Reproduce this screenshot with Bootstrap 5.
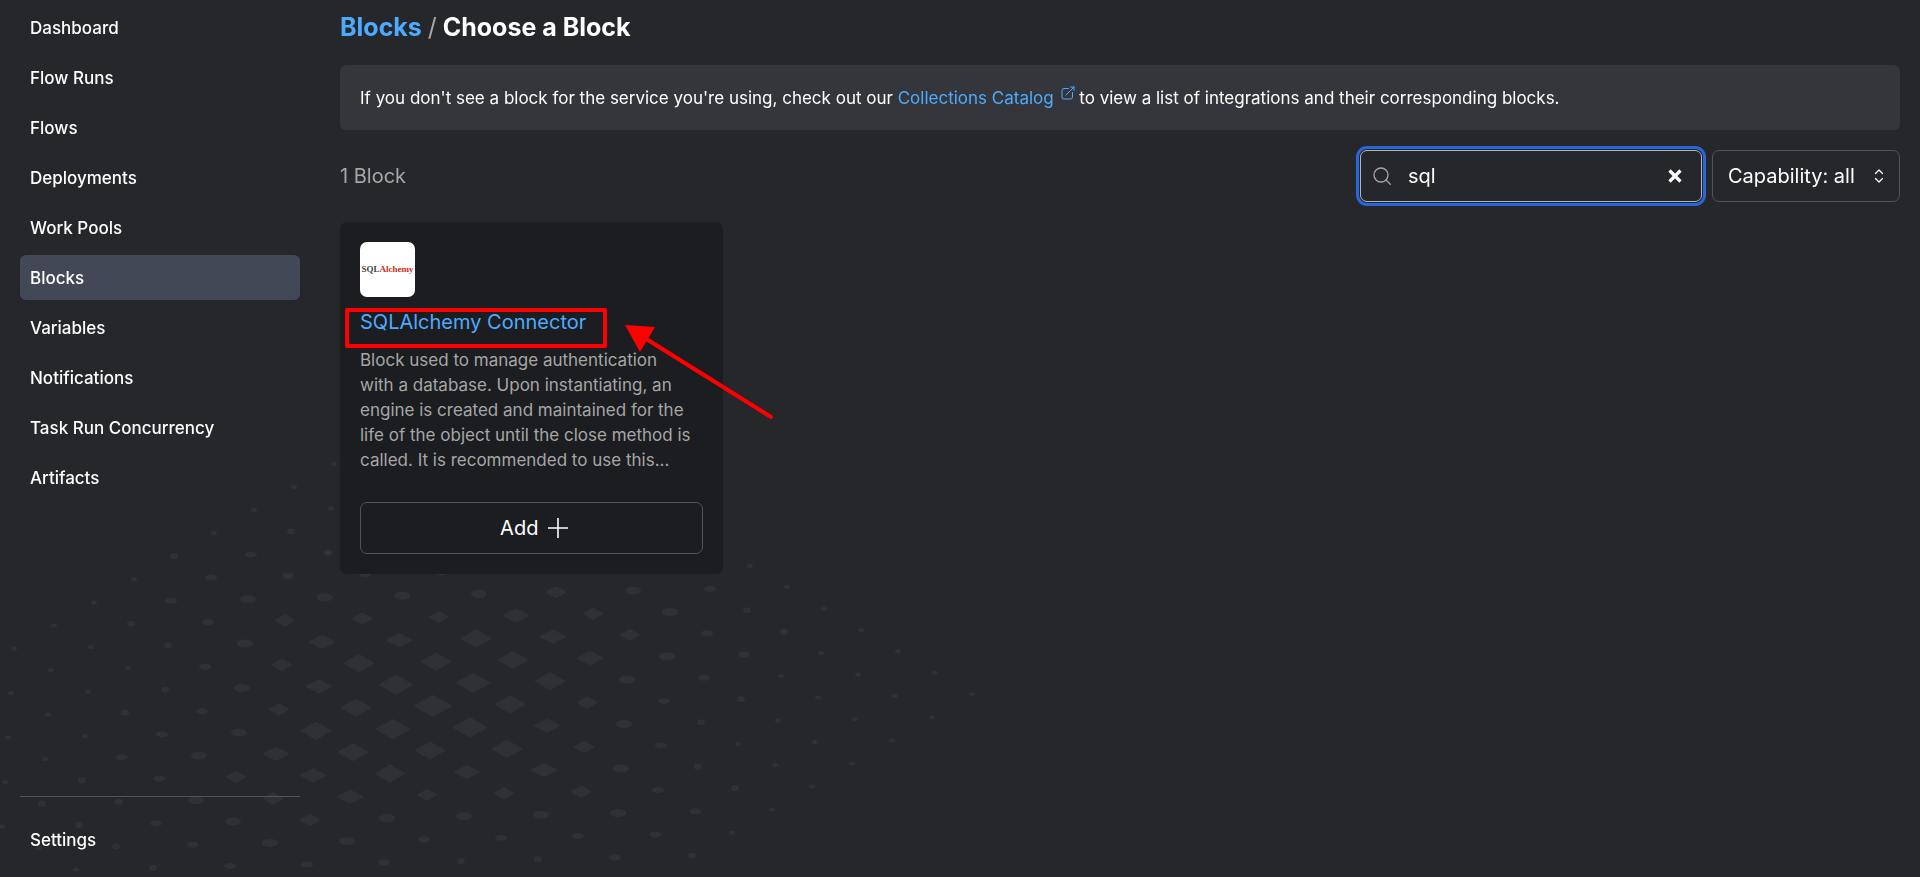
<!DOCTYPE html>
<html lang="en" data-bs-theme="dark">
<head>
<meta charset="utf-8">
<meta name="viewport" content="width=device-width, initial-scale=1">
<title>Blocks / Choose a Block</title>
<link href="https://cdn.jsdelivr.net/npm/bootstrap@5.3.0/dist/css/bootstrap.min.css" rel="stylesheet">
<style>
  :root { --line: #51525c; --sky: #4dabff; --soft: #a6a6a6; }
  body { background: #26272b; color: #fff; font-family: Inter, "Liberation Sans", sans-serif; font-size: 20px; line-height: 30px; }
  a { color: var(--sky); text-decoration: none; }
  .backdrop-dots { position: fixed; left: 0; bottom: 0; z-index: -1; fill: #303135; stroke: #303135; stroke-linejoin: round; pointer-events: none; }
  .side { width: 320px; padding: 5px 20px 15px; }
  .side .nav { gap: 5px; }
  .side .nav-link { color: #fff; font-size: 17px; font-weight: 500; line-height: 25px; padding: 11px 10px 9px; border-radius: 6px; }
  .side .nav-link.active { background: #434857; }
  .side-foot { border-top: 1px solid var(--line); padding-top: 20px; }
  .content { padding: 10px 20px 20px; gap: 20px; min-width: 0; }
  .crumbs { font-size: 25px; font-weight: 700; line-height: 35px; }
  .crumbs .slash { color: var(--soft); font-weight: 400; }
  .note, .block-text { font-size: 17px; line-height: 25px; }
  .note { background: #35363b; border-radius: 6px; padding: 21px 20px 19px; }
  .note svg { vertical-align: 4px; margin-left: 2px; }
  .tally { color: var(--soft); }
  .controls { gap: 10px; }
  .field { height: 52px; border: 1px solid var(--line); border-radius: 7px; background: #26272b; }
  .search { width: 342px; border-color: #b5b5b5; box-shadow: 0 0 0 1px #26272b, 0 0 0 4px #2668dc; padding: 0 19px 0 12px; gap: 17px; }
  .search input { background: none; border: 0; outline: 0; color: #fff; min-width: 0; padding: 0; }
  .search button { background: none; border: 0; padding: 0; line-height: 1; }
  .pick { width: 188px; }
  .pick select { appearance: none; background: none; border: 0; outline: 0; color: #fff; padding: 0 15px; }
  .pick svg { position: absolute; right: 15px; top: 17px; pointer-events: none; }
  .block-grid { --bs-gutter-x: 10px; --bs-gutter-y: 10px; }
  .block-card { background: #1c1d20; border: 0; border-radius: 7px; padding: 20px; }
  .logo-tile { width: 55px; height: 55px; border-radius: 7px; background: #fff; color: #444; font: 700 9px/55px "Liberation Serif", serif; }
  .logo-tile b { color: #cf2a14; }
  .block-name { font-size: 20px; font-weight: 400; line-height: 30px; margin: 10px 0 11px; }
  .block-text { color: var(--soft); margin-bottom: 29px; }
  .add-btn { height: 52px; border: 1px solid var(--line); border-radius: 7px; color: #fff; font-size: 20px; gap: 10px; padding-left: 18px; }
  .markup { position: absolute; left: 0; top: 0; overflow: visible; pointer-events: none; }
</style>
</head>
<body>
<svg class="backdrop-dots" id="dots" width="1000" height="440" viewBox="0 437 1000 440" aria-hidden="true"></svg>

<div class="d-flex min-vh-100">
  <aside class="side d-flex flex-column flex-shrink-0">
    <nav class="nav flex-column flex-nowrap">
      <a class="nav-link" href="#">Dashboard</a>
      <a class="nav-link" href="#">Flow Runs</a>
      <a class="nav-link" href="#">Flows</a>
      <a class="nav-link" href="#">Deployments</a>
      <a class="nav-link" href="#">Work Pools</a>
      <a class="nav-link active" aria-current="page" href="#">Blocks</a>
      <a class="nav-link" href="#">Variables</a>
      <a class="nav-link" href="#">Notifications</a>
      <a class="nav-link" href="#">Task Run Concurrency</a>
      <a class="nav-link" href="#">Artifacts</a>
    </nav>
    <div class="side-foot nav flex-column mt-auto">
      <a class="nav-link" href="#">Settings</a>
    </div>
  </aside>

  <main class="content d-flex flex-column flex-grow-1">
    <h1 class="crumbs m-0"><a href="#">Blocks</a> <span class="slash">/</span> Choose a Block</h1>

    <div class="note">If you don't see a block for the service you're using, check out our
      <a href="#">Collections Catalog
        <svg width="14" height="14" viewBox="0 0 14 14" fill="none" stroke="currentColor" stroke-linecap="round" stroke-linejoin="round" aria-hidden="true"><path d="M7.500 2.500H3Q1 2.500 1 4.500v6.500q0 2 2 2h6.500q2 0 2-2V6.500M5 9l8-8M9.500 1H13v3.500"/></svg></a>
      to view a list of integrations and their corresponding blocks.</div>

    <div class="d-flex align-items-center justify-content-between">
      <span class="tally">1 Block</span>
      <div class="controls d-flex">
        <div class="field search d-flex align-items-center">
          <svg class="flex-shrink-0" width="18" height="18" viewBox="0 0 18 18" fill="none" stroke="#a6a6a6" stroke-width="1.300" stroke-linecap="round" aria-hidden="true"><circle cx="8" cy="8" r="7"/><path d="M13 13l4.300 4.300"/></svg>
          <input class="flex-grow-1" type="text" value="sql" aria-label="Search blocks">
          <button type="button" class="d-flex text-white" aria-label="Clear search">
            <svg width="14" height="14" viewBox="0 0 14 14" fill="none" stroke="currentColor" stroke-width="3.200" aria-hidden="true"><path d="M1.500 1.500l11 11M12.500 1.500l-11 11"/></svg>
          </button>
        </div>
        <div class="field pick position-relative">
          <select class="w-100 h-100" aria-label="Capability"><option>Capability: all</option></select>
          <svg width="10" height="16" viewBox="0 0 10 16" fill="none" stroke="#fff" stroke-width="1.300" stroke-linecap="round" stroke-linejoin="round" aria-hidden="true"><path d="M1.500 5.500L5 2l3.500 3.500M1.500 10.500L5 14l3.500-3.500"/></svg>
        </div>
      </div>
    </div>

    <div class="row block-grid mt-0">
      <div class="col-12 col-md-6 col-xl-3 mt-0">
        <article class="card block-card">
          <div class="logo-tile text-center">SQL<b>Alchemy</b></div>
          <h2 class="block-name"><a href="#">SQLAlchemy Connector</a></h2>
          <p class="block-text">Block used to manage authentication<br>with a database. Upon instantiating, an<br>engine is created and maintained for the<br>life of the object until the close method is<br>called. It is recommended to use this...</p>
          <button type="button" class="btn add-btn d-flex align-items-center justify-content-center w-100">
            Add
            <svg width="20" height="20" viewBox="0 0 20 20" fill="none" stroke="currentColor" stroke-width="1.600" stroke-linecap="round" aria-hidden="true"><path d="M10 0v20M0 10h20"/></svg>
          </button>
          <svg class="markup" width="440" height="200" viewBox="0 0 440 200" fill="none" stroke="#f00" stroke-width="4" stroke-linecap="round" stroke-linejoin="round" aria-hidden="true">
            <rect x="7" y="88" width="258" height="36"/>
            <path d="M300 113L431 195"/>
            <path d="M285 103l30 2-15 25z" fill="#f00" stroke="none"/>
          </svg>
        </article>
      </div>
    </div>
  </main>
</div>

<script src="https://cdn.jsdelivr.net/npm/bootstrap@5.3.0/dist/js/bootstrap.bundle.min.js"></script>
<script>
  // Isometric halftone: each row has its first column index and one size digit per mark.
  const rows = {
    "-7": [-4, "111121111"],
    "-6": [-5, "111233321"],
    "-5": [-6, "111123432"],
    "-4": [-7, "1112234543"],
    "-3": [-8, "122333456543"],
    "-2": [-8, "1223445676543"],
    "-1": [-8, "12345677877654"],
    "0": [-7, "234567898765432"],
    "1": [-6, "34567787765431"],
    "2": [-5, "3445676544321"],
    "3": [-4, "334565433321"],
    "4": [-3, "23454322111"],
    "5": [-2, "2343211111"],
    "6": [-1, "333211111"],
    "7": [0, "21111111"]
  };
  const half = [[0, 0], [3, 2], [4, 3], [6, 3], [8, 4], [10, 6], [13, 7], [15, 9], [17, 10], [19, 11]];
  let marks = "";
  for (const [i, [first, sizes]] of Object.entries(rows)) {
    [...sizes].forEach((s, n) => {
      const j = first + n, x = 433 + 37 * i + 40 * j, y = 706 + 21.4 * i - 23.1 * j;
      const [w, h] = half[s];
      marks += s < 5
        ? `<ellipse cx="${x}" cy="${y}" rx="${w}" ry="${h}" stroke="none"/>`
        : `<path stroke-width="2" d="M${x - w + 1} ${y}L${x} ${y - h + 1}L${x + w - 1} ${y}L${x} ${y + h - 1}Z"/>`;
    });
  }
  document.getElementById("dots").innerHTML = marks;
</script>
</body>
</html>
